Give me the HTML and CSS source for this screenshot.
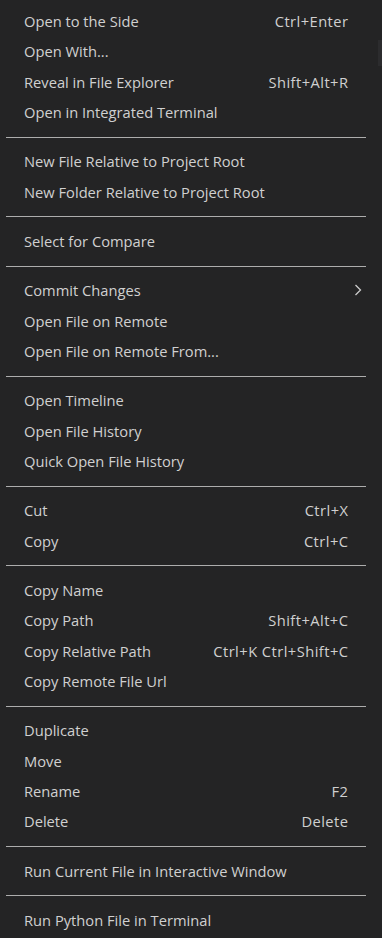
FILE: index.html
```html
<!DOCTYPE html>
<html lang="en">
<head>
<meta charset="utf-8">
<title>Context Menu</title>
<link rel="stylesheet" href="styles.css">
</head>
<body>
<div class="menu">
  <div class="item"><span class="label">Open to the Side</span><span class="key">Ctrl+Enter</span></div>
  <div class="item"><span class="label">Open With...</span></div>
  <div class="item"><span class="label">Reveal in File Explorer</span><span class="key">Shift+Alt+R</span></div>
  <div class="item"><span class="label">Open in Integrated Terminal</span></div>
  <div class="sep"></div>
  <div class="item"><span class="label">New File Relative to Project Root</span></div>
  <div class="item"><span class="label">New Folder Relative to Project Root</span></div>
  <div class="sep"></div>
  <div class="item"><span class="label">Select for Compare</span></div>
  <div class="sep"></div>
  <div class="item"><span class="label">Commit Changes</span><svg class="chev" width="8" height="14" viewBox="0 0 8 14"><path d="M1.5 2 L6.5 7 L1.5 12" fill="none" stroke="#cccccc" stroke-width="1.3"/></svg></div>
  <div class="item"><span class="label">Open File on Remote</span></div>
  <div class="item"><span class="label">Open File on Remote From...</span></div>
  <div class="sep"></div>
  <div class="item"><span class="label">Open Timeline</span></div>
  <div class="item"><span class="label">Open File History</span></div>
  <div class="item"><span class="label">Quick Open File History</span></div>
  <div class="sep"></div>
  <div class="item"><span class="label">Cut</span><span class="key">Ctrl+X</span></div>
  <div class="item"><span class="label">Copy</span><span class="key">Ctrl+C</span></div>
  <div class="sep"></div>
  <div class="item"><span class="label">Copy Name</span></div>
  <div class="item"><span class="label">Copy Path</span><span class="key">Shift+Alt+C</span></div>
  <div class="item"><span class="label">Copy Relative Path</span><span class="key">Ctrl+K Ctrl+Shift+C</span></div>
  <div class="item"><span class="label">Copy Remote File Url</span></div>
  <div class="sep"></div>
  <div class="item"><span class="label">Duplicate</span></div>
  <div class="item"><span class="label">Move</span></div>
  <div class="item"><span class="label">Rename</span><span class="key">F2</span></div>
  <div class="item"><span class="label">Delete</span><span class="key">Delete</span></div>
  <div class="sep"></div>
  <div class="item"><span class="label">Run Current File in Interactive Window</span></div>
  <div class="sep"></div>
  <div class="item"><span class="label">Run Python File in Terminal</span></div>
</div>
<div class="edge-thumb"></div>
</body>
</html>
```

FILE: styles.css
```css
html, body {
  margin: 0;
  padding: 0;
  background: #242425;
  overflow: hidden;
}
body {
  width: 382px;
  height: 938px;
  position: relative;
  font-family: "Open Sans", "Noto Sans", sans-serif;
  font-size: 14.7px;
  color: #d0d0d0;
}
.menu {
  padding-top: 6px;
  width: 382px;
}
.item {
  height: 30.33px;
  display: flex;
  align-items: center;
  justify-content: space-between;
  padding: 0 34px 0 24px;
  white-space: nowrap;
}
.key {
  color: #d0d0d0;
  letter-spacing: 0.45px;
  margin-right: -0.45px;
}
.chev {
  margin-right: -14px;
}
.sep {
  height: 19px;
  margin: 0 16px 0 6px;
  box-sizing: border-box;
  padding-top: 9.5px;
}
.sep::before {
  content: "";
  display: block;
  height: 1px;
  background: #adadad;
}
.edge-thumb {
  position: absolute;
  left: 378px;
  top: 40px;
  width: 4px;
  height: 26px;
  background: #2c2c2e;
}
```
